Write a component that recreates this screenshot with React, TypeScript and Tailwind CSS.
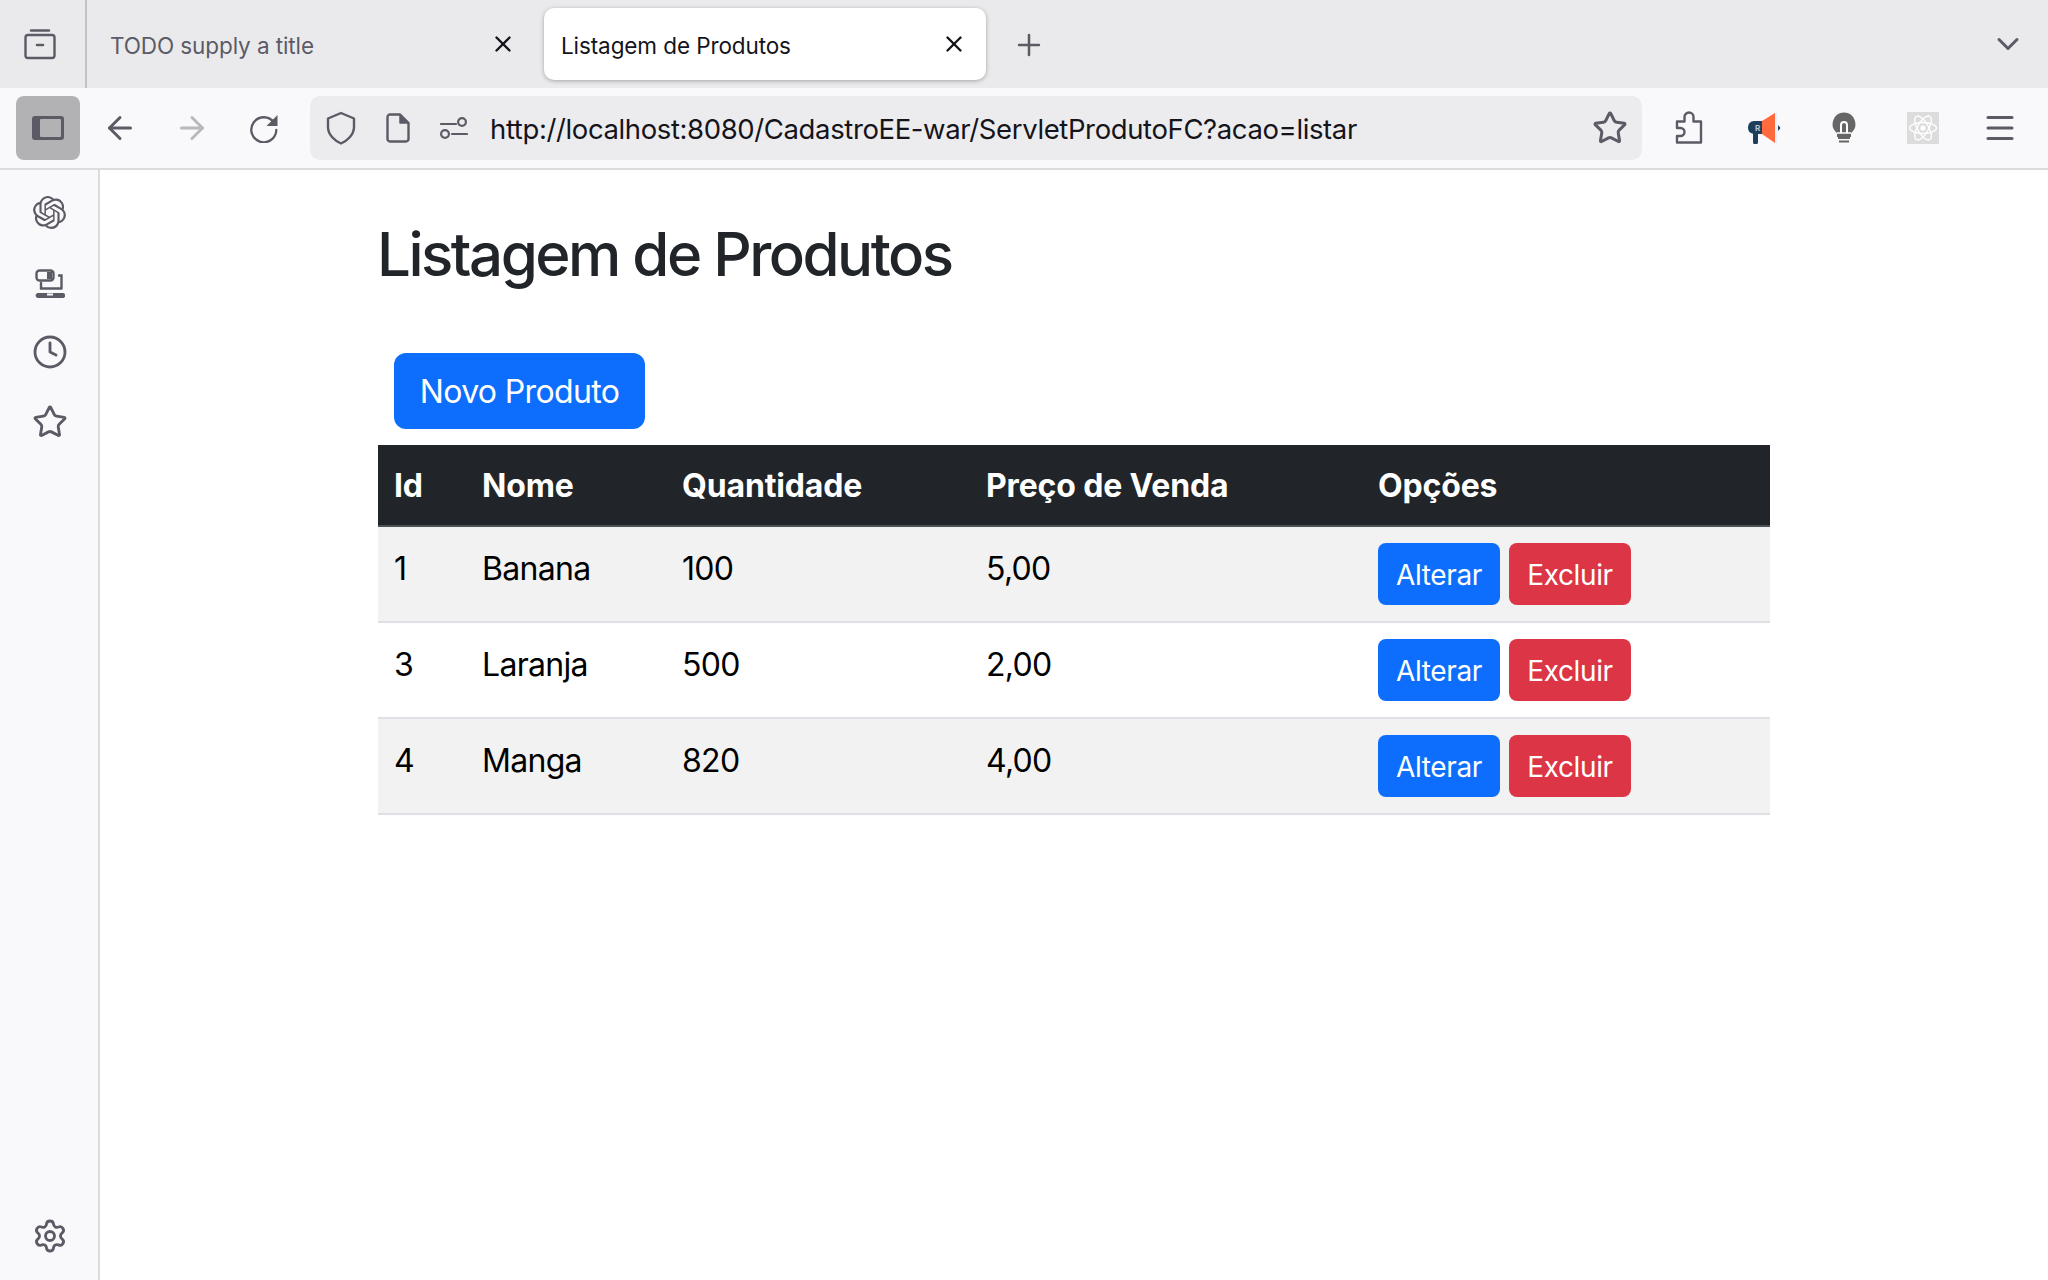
import { ArrowLeft, ArrowRight, ChevronDown, Clock, Menu, Plus, Settings, Star, X } from 'lucide-react';
import { SiOpenai } from 'react-icons/si';

const rows = [
  { id: 1, nome: 'Banana', quantidade: 100, preco: '5,00' },
  { id: 3, nome: 'Laranja', quantidade: 500, preco: '2,00' },
  { id: 4, nome: 'Manga', quantidade: 820, preco: '4,00' },
];

function TabsIcon() {
  return (
    <svg width="32" height="32" viewBox="0 0 32 32" fill="none" stroke="#5b5b66" strokeWidth="2.4" strokeLinecap="round">
      <path d="M7 2.5h18" />
      <rect x="1.5" y="7" width="29" height="23" rx="2.5" />
      <path d="M13 17h6" strokeWidth="2.6" />
    </svg>
  );
}

function SidebarToggleIcon() {
  return (
    <svg width="32" height="24" viewBox="0 0 32 24">
      <rect width="32" height="24" rx="3" fill="#5b5b66" />
      <rect x="8" y="3" width="21" height="18" rx="1" fill="#b2b2b5" />
    </svg>
  );
}

function ReloadIcon() {
  return (
    <svg width="30" height="30" viewBox="0 0 30 30" fill="none">
      <path d="M25 9.5A12.5 12.5 0 1 0 27.3 17" stroke="#5b5b66" strokeWidth="2.3" strokeLinecap="round" />
      <path d="M28.5 2v11h-11z" fill="#5b5b66" />
    </svg>
  );
}

function ShieldIcon() {
  return (
    <svg width="30" height="34" viewBox="0 0 30 34" fill="none" stroke="#5b5b66" strokeWidth="2.4" strokeLinejoin="round">
      <path d="M15 2 L28 7.5 V16 C28 24 21 30 15 32.5 C9 30 2 24 2 16 V7.5 Z" />
    </svg>
  );
}

function PageIcon() {
  return (
    <svg width="24" height="30" viewBox="0 0 24 30" fill="none">
      <path d="M14 1.5H4A2.5 2.5 0 0 0 1.5 4v22A2.5 2.5 0 0 0 4 28.5h16a2.5 2.5 0 0 0 2.5-2.5V10z" stroke="#5b5b66" strokeWidth="2.4" strokeLinejoin="round" />
      <path d="M14 1.5 22.5 10H14z" fill="#5b5b66" stroke="#5b5b66" strokeWidth="1.5" strokeLinejoin="round" />
    </svg>
  );
}

function PermissionsIcon() {
  return (
    <svg width="28" height="22" viewBox="0 0 28 22" fill="none" stroke="#5b5b66" strokeWidth="2.2" strokeLinecap="round">
      <path d="M1 7h15" />
      <circle cx="22" cy="5" r="3.9" />
      <path d="M12 17h15" />
      <circle cx="5" cy="17" r="3.9" />
    </svg>
  );
}

function PuzzleIcon() {
  return (
    <svg width="28" height="34" viewBox="0 0 28 34" fill="none" stroke="#5b5b66" strokeWidth="2.4" strokeLinejoin="round">
      <path d="M2 10.5h7.5V6a4.5 4.5 0 0 1 9 0v4.5H26v21H2v-6.5h3.5a4 4 0 0 0 0-8H2z" />
    </svg>
  );
}

function MegaphoneIcon() {
  return (
    <svg width="34" height="32" viewBox="0 0 34 32">
      <path d="M7 9h8v13H11v8a2.5 2.5 0 0 1-5 0v-8.2A6.5 6.5 0 0 1 7 9z" fill="#1d3f5e" />
      <path d="M15 9 L28 1 V31 L15 22z" fill="#ff6b3d" />
      <rect x="28" y="1" width="2" height="30" fill="#e4eef8" />
      <path d="M31 13l2.5 3-2.5 3z" fill="#1d3f5e" />
      <text x="8" y="19" fontSize="8" fontWeight="700" fontFamily="Inter, sans-serif" fill="#b9c4cf">R</text>
    </svg>
  );
}

function BulbIcon() {
  return (
    <svg width="24" height="32" viewBox="0 0 24 32">
      <path d="M12 .5A11.5 11.5 0 0 1 19 21v4H5v-4A11.5 11.5 0 0 1 12 .5z" fill="#666666" />
      <path d="M9 21v-8a3 3 0 0 1 6 0v8" fill="none" stroke="#ffffff" strokeWidth="2" />
      <path d="M5 21h14" stroke="#ffffff" strokeWidth="1.5" />
      <path d="M5 23h14M6 26h12M7 29.5h10" stroke="#666666" strokeWidth="2" />
    </svg>
  );
}

function ReactIcon() {
  return (
    <div className="w-8 h-8 bg-[#dcdcdc] flex items-center justify-center">
      <svg width="30" height="30" viewBox="0 0 30 30" fill="none" stroke="#ffffff" strokeWidth="1.4">
        <circle cx="15" cy="15" r="2.6" fill="#ffffff" stroke="none" />
        <ellipse cx="15" cy="15" rx="13.5" ry="5.5" />
        <ellipse cx="15" cy="15" rx="13.5" ry="5.5" transform="rotate(60 15 15)" />
        <ellipse cx="15" cy="15" rx="13.5" ry="5.5" transform="rotate(120 15 15)" />
      </svg>
    </div>
  );
}

function LaptopIcon() {
  return (
    <svg width="30" height="30" viewBox="0 0 30 30" fill="none" stroke="#5b5b66" strokeWidth="2.4" strokeLinecap="round">
      <rect x="1.5" y="1.5" width="17" height="10" rx="3" />
      <rect x="12" y="3" width="5" height="7" fill="#5b5b66" stroke="none" />
      <path d="M24 6.5h2.5v13M6 14v5.5h20" />
      <path d="M3 24.5h25a1.5 1.5 0 0 1 0 4H3a1.5 1.5 0 0 1 0-4z" fill="#5b5b66" strokeWidth="1" />
      <rect x="12" y="24.5" width="6" height="2" fill="#f9f9fb" stroke="none" />
    </svg>
  );
}

function Tab({ title, active }: { title: string; active?: boolean }) {
  return (
    <div
      className={
        active
          ? 'w-[442px] h-[72px] ml-[16px] pl-[17px] pr-[19px] flex items-center justify-between bg-white rounded-[10px] shadow-[0_1px_4px_rgba(0,0,0,0.3)] text-[#15141a]'
          : 'w-[441px] h-[72px] pl-[23px] pr-[12px] flex items-center justify-between text-[#5b5b66]'
      }
    >
      <span className="text-[22.5px] leading-none mt-1 tracking-[-0.1px]">{title}</span>
      <X size={26} strokeWidth={2.2} className="text-[#15141a]" />
    </div>
  );
}

function ActionButton({ label, danger }: { label: string; danger?: boolean }) {
  return (
    <button
      className={
        danger
          ? 'h-[62px] w-[122px] pt-0.5 rounded-lg bg-[#dc3545] text-white text-[28px] leading-none tracking-[-0.37px]'
          : 'h-[62px] w-[122px] pt-0.5 rounded-lg bg-[#0d6efd] text-white text-[28px] leading-none tracking-[-0.37px]'
      }
    >
      {label}
    </button>
  );
}

export default function App() {
  return (
    <div className="h-screen flex flex-col bg-white font-['Inter',sans-serif] overflow-hidden">
      {/* tab strip */}
      <div className="h-[88px] shrink-0 flex items-center bg-[#eaeaed]">
        <div className="w-[80px] h-full flex items-center justify-center shrink-0">
          <TabsIcon />
        </div>
        <div className="w-0.5 h-full bg-[#c3c3c6] ml-[5px]" />
        <Tab title="TODO supply a title" />
        <Tab title="Listagem de Produtos" active />
        <Plus size={34} strokeWidth={1.8} className="ml-[26px] mt-0.5 text-[#5b5b66]" />
        <ChevronDown size={36} strokeWidth={2} className="ml-auto mr-[22px] text-[#5b5b66]" />
      </div>

      {/* toolbar */}
      <div className="h-[82px] shrink-0 flex items-start pt-2 bg-[#f9f9fb] border-b-2 border-[#dcdcdf]">
        <div className="w-16 h-16 ml-4 flex items-center justify-center rounded-lg bg-[#b2b2b5]">
          <SidebarToggleIcon />
        </div>
        <div className="h-16 w-[230px] flex items-center shrink-0">
          <ArrowLeft size={36} strokeWidth={2} className="ml-[22px] text-[#5b5b66]" />
          <ArrowRight size={36} strokeWidth={2} className="ml-[36px] text-[#b8b8bd]" />
          <div className="ml-[39px]">
            <ReloadIcon />
          </div>
        </div>
        <div className="w-[1332px] h-16 flex items-center bg-[#ececef] rounded-[10px] shrink-0">
          <div className="ml-4">
            <ShieldIcon />
          </div>
          <div className="ml-[30px]">
            <PageIcon />
          </div>
          <div className="ml-[30px]">
            <PermissionsIcon />
          </div>
          <span className="ml-[22px] mt-1 text-[27.5px] tracking-[-0.38px] text-[#15141a] whitespace-nowrap">
            http://localhost:8080/CadastroEE-war/ServletProdutoFC?acao=listar
          </span>
          <Star size={36} strokeWidth={2} className="ml-auto mr-[14px] text-[#5b5b66]" />
        </div>
        <div className="h-16 flex items-center pl-[33px]">
          <PuzzleIcon />
          <div className="ml-[44px]">
            <MegaphoneIcon />
          </div>
          <div className="ml-[51px]">
            <BulbIcon />
          </div>
          <div className="ml-[51px]">
            <ReactIcon />
          </div>
          <Menu size={36} strokeWidth={2} className="ml-[43px] text-[#5b5b66]" />
        </div>
      </div>

      <div className="flex-1 flex min-h-0">
        {/* sidebar */}
        <div className="w-[100px] shrink-0 flex flex-col items-center bg-[#f9f9fb] border-r-2 border-[#dcdcdf] pl-px pt-[26px] pb-[26px]">
          <SiOpenai size={33} className="text-[#5b5b66]" />
          <div className="mt-[40px]">
            <LaptopIcon />
          </div>
          <Clock size={36} strokeWidth={1.9} className="mt-[35px] text-[#5b5b66]" />
          <Star size={36} strokeWidth={1.9} className="mt-[34px] text-[#5b5b66]" />
          <Settings size={36} strokeWidth={1.9} className="mt-auto text-[#5b5b66]" />
        </div>

        {/* page */}
        <div className="flex-1 pl-[278px]">
          <h1 className="mt-[48px] -ml-px h-[80px] text-[60px] leading-[72px] font-medium tracking-[-2.5px] text-[#212529]">
            Listagem de Produtos
          </h1>
          <button className="block mt-[55px] ml-4 w-[251px] h-[76px] rounded-xl bg-[#0d6efd] text-white text-[32px] leading-none tracking-[-0.65px] pt-0.5">
            Novo Produto
          </button>
          <table className="mt-4 w-[1392px] table-fixed border-collapse text-[32px] leading-[48px]">
            <thead>
              <tr className="h-[81px] bg-[#212529] text-white border-b-2 border-[#4d5154] tracking-[-0.15px]">
                <th className="w-[88px] pl-4 pt-0.5 text-left font-bold">Id</th>
                <th className="w-[200px] pl-4 pt-0.5 text-left font-bold">Nome</th>
                <th className="w-[304px] pl-4 pt-0.5 text-left font-bold">Quantidade</th>
                <th className="w-[392px] pl-4 pt-0.5 text-left font-bold">Preço de Venda</th>
                <th className="pl-4 pt-0.5 text-left font-bold">Opções</th>
              </tr>
            </thead>
            <tbody className="tracking-[-0.7px]">
              {rows.map((row, i) => (
                <tr key={row.id} className={i % 2 === 0 ? 'bg-[#f2f2f2] border-b-2 border-[#dee2e6]' : 'bg-white border-b-2 border-[#dee2e6]'}>
                  <td className="h-[96px] pl-4 pt-[18px] align-top text-black">{row.id}</td>
                  <td className="h-[96px] pl-4 pt-[18px] align-top text-black">{row.nome}</td>
                  <td className="h-[96px] pl-4 pt-[18px] align-top text-black">{row.quantidade}</td>
                  <td className="h-[96px] pl-4 pt-[18px] align-top text-black">{row.preco}</td>
                  <td className="h-[96px] pl-4 align-middle">
                    <div className="flex gap-[9px]">
                      <ActionButton label="Alterar" />
                      <ActionButton label="Excluir" danger />
                    </div>
                  </td>
                </tr>
              ))}
            </tbody>
          </table>
        </div>
      </div>
    </div>
  );
}
